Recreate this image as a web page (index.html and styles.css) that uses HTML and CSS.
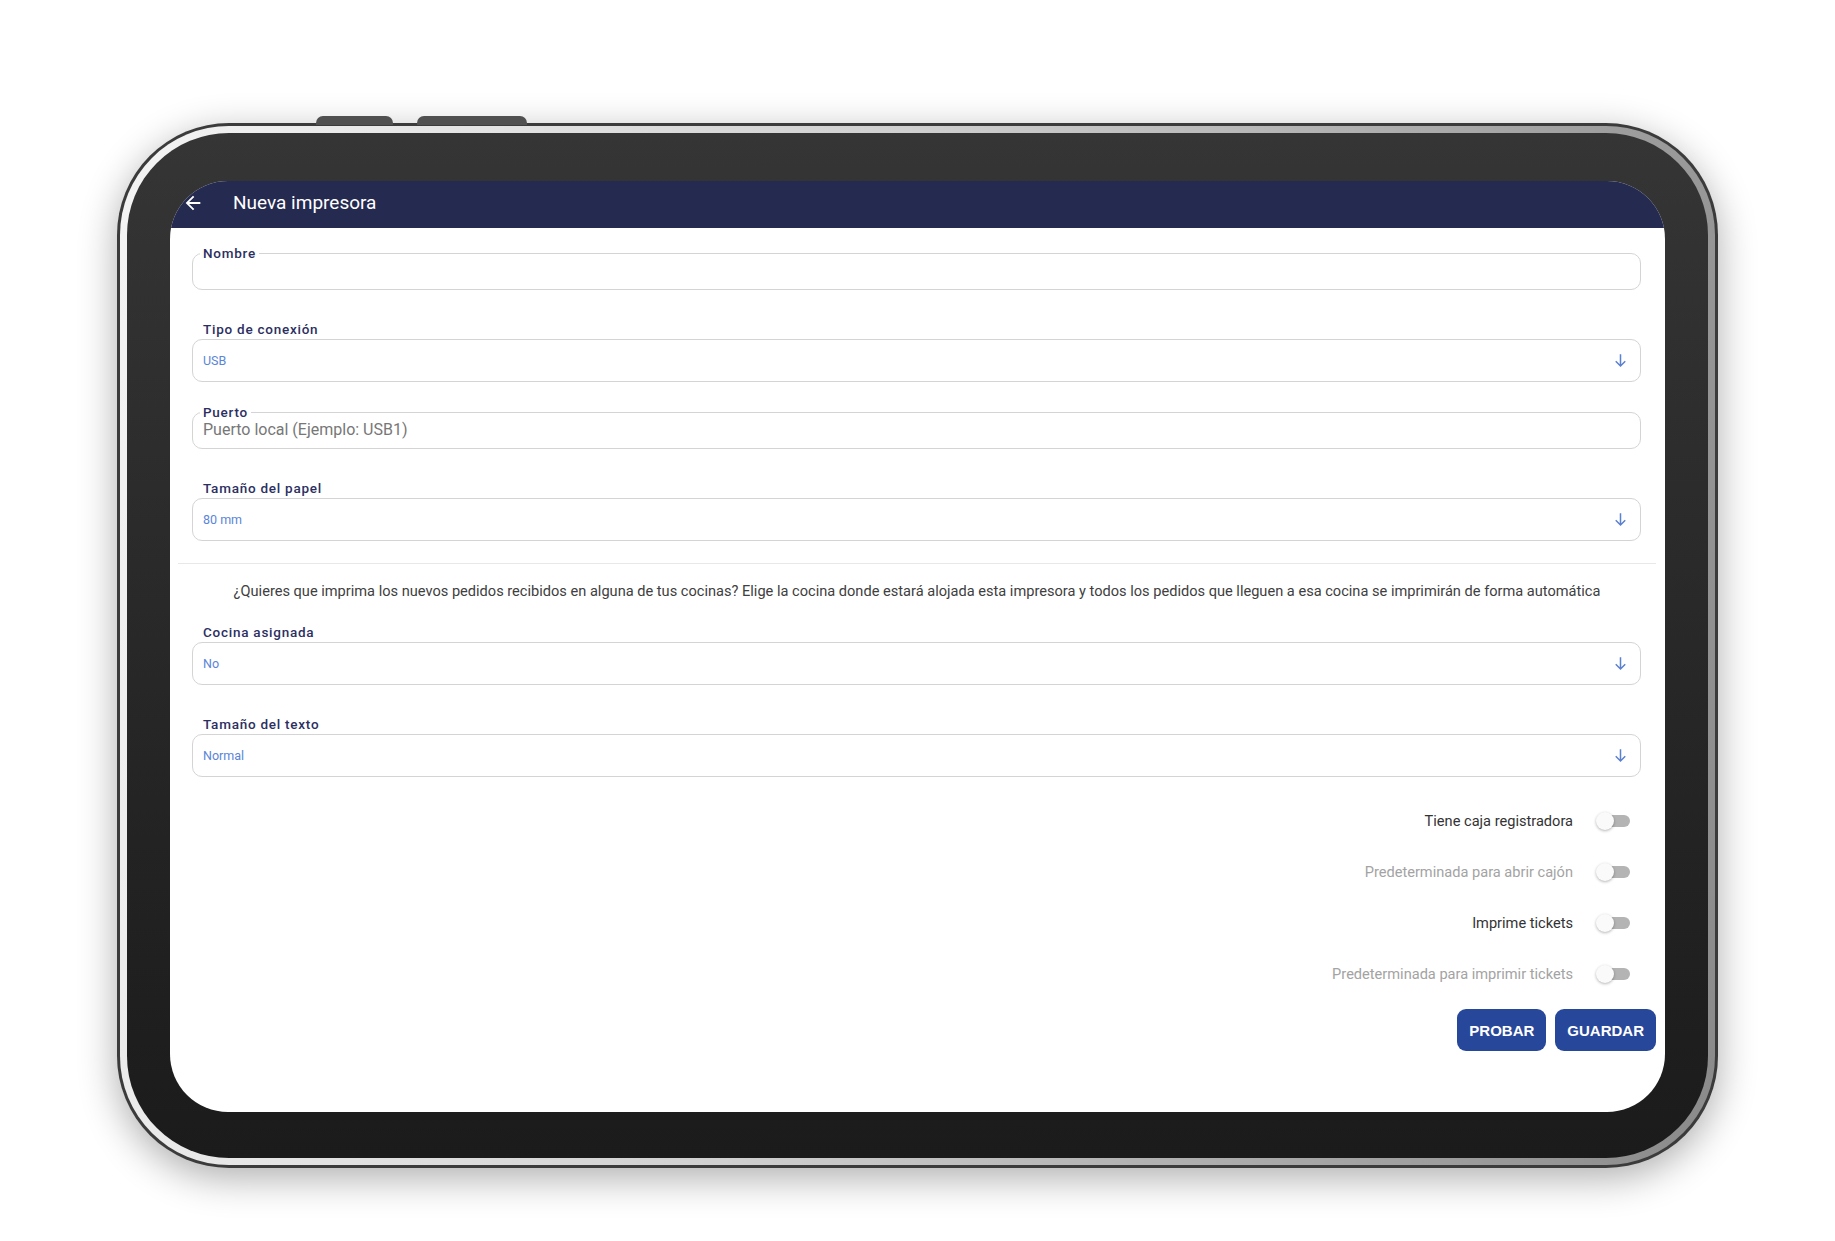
FILE: index.html
```html
<!DOCTYPE html>
<html lang="es">
<head>
    <meta charset="UTF-8">
    <meta name="viewport" content="width=device-width, initial-scale=1.0">
    <title>Nueva impresora</title>
    <link rel="stylesheet" href="styles.css">
</head>
<body>
    <div class="stage">
        <div class="device">
            <!-- botones laterales de la tablet -->
            <div class="keys">
                <span class="key key-short"></span>
                <span class="key key-long"></span>
            </div>
            <div class="frame">
                <div class="rim">
                    <div class="bezel">
                        <div class="screen">
                            <header class="topbar">
                                <svg class="back" viewBox="0 0 24 24"><path d="M20 11H7.83l5.59-5.59L12 4l-8 8 8 8 1.41-1.41L7.83 13H20v-2z"/></svg>
                                <span class="title">Nueva impresora</span>
                            </header>

                            <form class="form">
                                <fieldset class="outlined inset first">
                                    <legend>Nombre</legend>
                                    <input type="text">
                                </fieldset>

                                <div class="field inset gap-lg">
                                    <label>Tipo de conexión</label>
                                    <div class="select">
                                        <span>USB</span>
                                        <svg class="chevron" viewBox="0 0 24 24"><path d="M12 4v15M6 13l6 6 6-6"/></svg>
                                    </div>
                                </div>

                                <fieldset class="outlined inset gap-md">
                                    <legend>Puerto</legend>
                                    <input type="text" placeholder="Puerto local (Ejemplo: USB1)">
                                </fieldset>

                                <div class="field inset gap-lg">
                                    <label>Tamaño del papel</label>
                                    <div class="select">
                                        <span>80 mm</span>
                                        <svg class="chevron" viewBox="0 0 24 24"><path d="M12 4v15M6 13l6 6 6-6"/></svg>
                                    </div>
                                </div>

                                <hr class="divider">

                                <p class="note">¿Quieres que imprima los nuevos pedidos recibidos en alguna de tus cocinas? Elige la cocina donde estará alojada esta impresora y todos los pedidos que lleguen a esa cocina se imprimirán de forma automática</p>

                                <div class="field inset kitchen">
                                    <label>Cocina asignada</label>
                                    <div class="select">
                                        <span>No</span>
                                        <svg class="chevron" viewBox="0 0 24 24"><path d="M12 4v15M6 13l6 6 6-6"/></svg>
                                    </div>
                                </div>

                                <div class="field inset gap-lg">
                                    <label>Tamaño del texto</label>
                                    <div class="select">
                                        <span>Normal</span>
                                        <svg class="chevron" viewBox="0 0 24 24"><path d="M12 4v15M6 13l6 6 6-6"/></svg>
                                    </div>
                                </div>

                                <div class="switches">
                                    <div class="switch-row"><span>Tiene caja registradora</span><span class="switch"></span></div>
                                    <div class="switch-row muted"><span>Predeterminada para abrir cajón</span><span class="switch"></span></div>
                                    <div class="switch-row"><span>Imprime tickets</span><span class="switch"></span></div>
                                    <div class="switch-row muted"><span>Predeterminada para imprimir tickets</span><span class="switch"></span></div>
                                </div>

                                <div class="actions">
                                    <button type="button" class="btn">PROBAR</button>
                                    <button type="button" class="btn">GUARDAR</button>
                                </div>
                            </form>
                        </div>
                    </div>
                </div>
            </div>
        </div>
    </div>
</body>
</html>
```

FILE: styles.css
```css
body {
    margin: 0;
    background: #fff;
    font-family: Roboto, "Noto Sans", sans-serif;
}
.stage { padding: 116px 0 73px 117px; }
.device { width: 1601px; }

/* botones de arriba */
.keys { display: flex; gap: 24px; padding-left: 199px; height: 9px; margin-bottom: -2px; }
.key { display: block; height: 9px; background: #505050; border-radius: 7px 7px 0 0; }
.key-short { width: 77px; }
.key-long { width: 110px; }

.frame {
    height: 1045px;
    box-sizing: border-box;
    padding: 3px;
    background: #3b3b3b;
    border-radius: 112px;
    box-shadow: 0 10px 38px rgba(0, 0, 0, 0.32);
}
.rim {
    height: 100%;
    box-sizing: border-box;
    padding: 7px;
    border-radius: 109px;
    background: linear-gradient(100deg, #f4f4f4 0%, #cfcfcf 45%, #8a8a8a 100%);
}
.bezel {
    height: 100%;
    box-sizing: border-box;
    padding: 48px 43px 46px 43px;
    border-radius: 102px;
    background: linear-gradient(#353535, #1b1b1b);
}
.screen {
    height: 931px;
    background: #fff;
    border-radius: 58px;
    overflow: hidden;
}

.topbar {
    height: 47px;
    box-sizing: border-box;
    padding: 0 0 4px 12px;
    background: #252a51;
    display: flex;
    align-items: center;
    color: #fff;
}
.back { width: 22px; height: 22px; fill: #fff; margin-right: 29px; }
.title { font-size: 19px; }

.form { padding: 0 9px 0 8px; }
.inset { margin-left: 14px; margin-right: 15px; }
.first { margin-top: 18px; }
.gap-lg { margin-top: 32px; }
.gap-md { margin-top: 23px; }
.kitchen { margin-top: 24px; }

.outlined {
    border: 1px solid #d4d4d4;
    border-radius: 10px;
    padding: 0 7px 9px;
    min-inline-size: 0;
}
.outlined legend,
.field label {
    font-size: 13.5px;
    line-height: 15px;
    font-weight: 500;
    letter-spacing: 0.75px;
    color: #2c2f62;
}
.outlined legend { padding: 0 3px; }
.outlined input {
    display: block;
    width: 100%;
    height: 19px;
    padding: 0 0 0 3px;
    border: none;
    outline: none;
    background: transparent;
    font-family: Roboto, sans-serif;
    font-size: 16px;
    color: #333;
}
.outlined input::placeholder { color: #777; }

.field label { display: block; margin: 0 0 2px 11px; }
.select {
    height: 43px;
    box-sizing: border-box;
    border: 1px solid #d4d4d4;
    border-radius: 10px;
    display: flex;
    align-items: center;
    justify-content: space-between;
    padding: 0 10px 0 10px;
    font-size: 12.5px;
    color: #5a85d8;
}
.chevron { width: 19px; height: 19px; fill: none; stroke: #5a80d2; stroke-width: 1.9; }

.divider { border: 0; height: 1px; background: #e8e8e8; margin: 22px 0 0; }

.note {
    margin: 17px 0 0;
    text-align: center;
    font-size: 14.6px;
    line-height: 20px;
    color: #404040;
}

.switches { margin: 34px 26px 0 0; display: flex; flex-direction: column; gap: 31px; }
.switch-row {
    display: flex;
    justify-content: flex-end;
    align-items: center;
    gap: 23px;
    height: 20px;
    font-size: 14.6px;
    color: #333;
}
.switch-row.muted { color: #a3a3a3; }
.switch { position: relative; width: 34px; height: 18px; }
.switch::before {
    content: "";
    position: absolute;
    left: 6px; right: 0; top: 3px;
    height: 12px;
    border-radius: 6px;
    background: #b4b4b4;
}
.switch::after {
    content: "";
    position: absolute;
    left: 0; top: 0;
    width: 18px; height: 18px;
    border-radius: 50%;
    background: #fafafa;
    box-shadow: 0 1px 3px rgba(0, 0, 0, 0.3);
}

.actions { display: flex; justify-content: flex-end; gap: 9px; margin-top: 25px; }
.btn {
    height: 42px;
    padding: 0 12px;
    border: none;
    border-radius: 9px;
    background: #27479a;
    color: #fff;
    font-family: "Liberation Sans", Arial, sans-serif;
    font-weight: bold;
    font-size: 15px;
}
```
